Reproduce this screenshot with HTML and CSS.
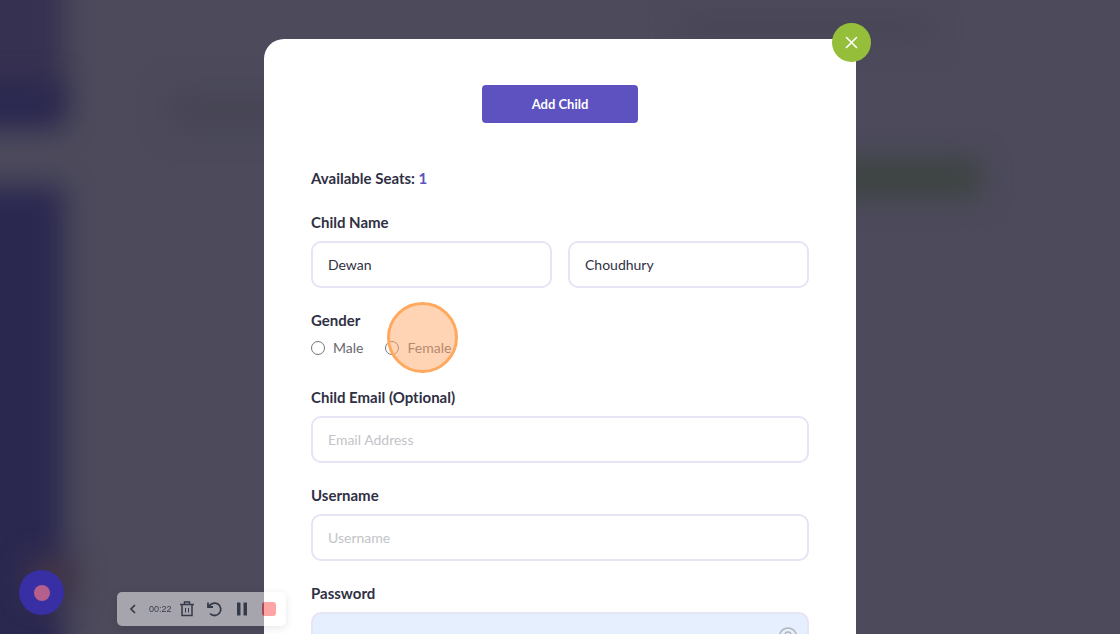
FILE: index.html
```html
<!DOCTYPE html>
<html lang="en">
<head>
    <meta charset="UTF-8">
    <meta name="viewport" content="width=device-width, initial-scale=1.0">
    <title>Add Child</title>
    <link rel="stylesheet" href="styles.css">
</head>
<body>
    <!-- blurred page behind the modal -->
    <div class="backdrop" aria-hidden="true">
        <div class="blob blob-nav-top"></div>
        <div class="blob blob-nav-active"></div>
        <div class="blob blob-nav-main"></div>
        <div class="blob blob-title"></div>
        <div class="blob blob-header"></div>
        <div class="blob blob-button"></div>
        <div class="blob blob-avatar"></div>
    </div>

    <main class="modal">
        <button type="button" class="btn-close" aria-label="Close">
            <svg width="13" height="13" viewBox="0 0 13 13" fill="none" stroke="#fff" stroke-width="1.6" stroke-linecap="round">
                <path d="M1.5 1.5l10 10M11.5 1.5l-10 10"/>
            </svg>
        </button>

        <form id="childForm">
            <button type="submit" class="btn-submit">Add Child</button>

            <p class="seats">Available Seats: <span>1</span></p>

            <div class="form-group">
                <label for="firstName">Child Name</label>
                <div class="name-row">
                    <input type="text" class="text-input" id="firstName" value="Dewan">
                    <input type="text" class="text-input" id="lastName" value="Choudhury" aria-label="Last name">
                </div>
            </div>

            <fieldset class="form-group gender">
                <legend>Gender</legend>
                <div class="radio-row">
                    <label class="radio"><input type="radio" name="gender" value="male">Male</label>
                    <label class="radio"><input type="radio" name="gender" value="female">Female<span class="click-marker"></span></label>
                </div>
            </fieldset>

            <div class="form-group">
                <label for="email">Child Email (Optional)</label>
                <input type="email" class="text-input" id="email" placeholder="Email Address">
            </div>

            <div class="form-group">
                <label for="username">Username</label>
                <input type="text" class="text-input" id="username" placeholder="Username">
            </div>

            <div class="form-group">
                <label for="password">Password</label>
                <div class="password-wrap">
                    <input type="password" class="text-input filled" id="password">
                    <button type="button" class="btn-eye" aria-label="Show password">
                        <svg width="20" height="16" viewBox="0 0 20 16" fill="none" stroke="#b4b6bc" stroke-width="1.5">
                            <path d="M1 8C3 3.500 6 1 10 1s7 2.500 9 7c-2 4.500-5 7-9 7s-7-2.500-9-7z"/>
                            <circle cx="10" cy="8" r="3"/>
                        </svg>
                    </button>
                </div>
            </div>
        </form>
    </main>

    <button type="button" class="btn-record" aria-label="Recorder"><span></span></button>

    <div class="recorder">
        <button type="button" aria-label="Collapse">
            <svg width="8" height="10" viewBox="0 0 8 10" fill="none" stroke="currentColor" stroke-width="1.7">
                <path d="M6 1L2 5l4 4"/>
            </svg>
        </button>
        <span class="time">00:22</span>
        <button type="button" aria-label="Delete">
            <svg width="14" height="16" viewBox="0 0 14 16" fill="none" stroke="currentColor" stroke-width="1.5">
                <path d="M0 3.500h14M4.500 3V1h5v2M2 3.500v11h10v-11"/>
                <path d="M5.500 7v4.500M8.500 7v4.500" stroke-width="1"/>
            </svg>
        </button>
        <button type="button" aria-label="Restart">
            <svg width="14" height="16" viewBox="1 0 14 16" fill="none" stroke="currentColor" stroke-width="1.8" overflow="visible">
                <path d="M2 5.500A6.200 6.200 0 1 1 3 12.500"/>
                <path d="M1 1.500v4.500h5"/>
            </svg>
        </button>
        <button type="button" aria-label="Pause">
            <svg width="12" height="14" viewBox="0 0 12 14" fill="currentColor">
                <rect x="1" y=".5" width="3.500" height="13" rx=".5"/>
                <rect x="7.500" y=".5" width="3.500" height="13" rx=".5"/>
            </svg>
        </button>
        <button type="button" class="btn-stop" aria-label="Stop"></button>
    </div>
</body>
</html>
```
FILE: styles.css
```css
:root {
    --primary-color: #5d52bf;
    --accent-color: #95bf3a;
    --text-color: #2f3044;
    --border-color: #e6e4f5;
    --overlay-color: #4c4a5b;
}

* {
    margin: 0;
    padding: 0;
    box-sizing: border-box;
}

body {
    font-family: Lato, "Noto Sans", sans-serif;
    font-size: 14px;
    font-variant-ligatures: none;
    line-height: 24px;
    color: var(--text-color);
    background-color: var(--overlay-color);
    height: 100vh;
    overflow: hidden;
}

button {
    border: none;
    background: none;
    color: inherit;
    font-family: inherit;
    cursor: pointer;
}

/* Blurred page */
.backdrop {
    position: fixed;
    inset: 0;
    overflow: hidden;
}

.blob {
    position: absolute;
    background-color: #2b2850;
    filter: blur(14px);
}

.blob-nav-top {
    left: -40px;
    top: -40px;
    width: 104px;
    height: 150px;
    background-color: #363150;
}

.blob-nav-active {
    left: -40px;
    top: 82px;
    width: 104px;
    height: 46px;
}

.blob-nav-main {
    left: -40px;
    top: 186px;
    width: 104px;
    bottom: -40px;
}

.blob-title {
    left: 170px;
    top: 90px;
    width: 140px;
    height: 40px;
    background-color: #474555;
}

.blob-header {
    left: 680px;
    top: 15px;
    width: 250px;
    height: 25px;
    background-color: #474556;
}

.blob-button {
    left: 780px;
    top: 160px;
    width: 200px;
    height: 36px;
    background-color: #3c433f;
}

.blob-avatar {
    left: 30px;
    bottom: 35px;
    width: 45px;
    height: 40px;
    background-color: #453747;
}

/* Modal */
.modal {
    position: relative;
    width: calc(100% - 32px);
    max-width: 592px;
    margin: 39px auto 0;
    padding: 46px 47px;
    background-color: #fff;
    border-radius: 20px;
}

.btn-close {
    position: absolute;
    top: -16px;
    right: -15px;
    width: 39px;
    height: 39px;
    display: flex;
    align-items: center;
    justify-content: center;
    background-color: var(--accent-color);
    border-radius: 50%;
}

.btn-submit {
    display: block;
    width: 156px;
    height: 38px;
    margin: 0 auto 44px;
    background-color: var(--primary-color);
    color: #fff;
    font-size: 13px;
    font-weight: bold;
    border-radius: 4px;
}

.seats,
.form-group > label,
legend {
    display: block;
    font-size: 15px;
    font-weight: bold;
    line-height: 22px;
}

.seats {
    margin-bottom: 22px;
}

.seats span {
    color: var(--primary-color);
}

.form-group {
    margin-bottom: 21px;
    border: none;
}

.form-group > label {
    margin-bottom: 8px;
}

.name-row {
    display: flex;
    gap: 16px;
}

.text-input {
    width: 100%;
    height: 47px;
    padding: 0 15px;
    border: 2px solid var(--border-color);
    border-radius: 10px;
    background-color: #fff;
    color: var(--text-color);
    font-family: inherit;
    font-size: 14px;
}

.text-input::placeholder {
    color: #c3c4c8;
}

.text-input.filled {
    background-color: #e5effd;
}

.radio-row {
    display: flex;
    gap: 22px;
    padding: 5px 0;
}

.radio {
    position: relative;
    display: flex;
    align-items: center;
    gap: 8px;
    color: #68686f;
}

.radio input {
    appearance: none;
    width: 14px;
    height: 14px;
    border: 1px solid #75757b;
    border-radius: 50%;
}

/* click highlight over the Female option */
.click-marker {
    position: absolute;
    top: -34px;
    left: 2px;
    width: 71px;
    height: 71px;
    border: 3px solid #ffa95f;
    border-radius: 50%;
    background-color: rgba(255, 170, 108, 0.5);
    pointer-events: none;
}

.password-wrap {
    position: relative;
}

.btn-eye {
    position: absolute;
    top: 15px;
    right: 11px;
    height: 16px;
    line-height: 0;
}

/* Recorder */
.btn-record {
    position: fixed;
    left: 19px;
    bottom: 19px;
    width: 45px;
    height: 45px;
    display: flex;
    align-items: center;
    justify-content: center;
    background-color: #372fa3;
    border-radius: 50%;
}

.btn-record span {
    width: 16px;
    height: 16px;
    background-color: #b55f8d;
    border-radius: 50%;
}

.recorder {
    position: fixed;
    left: 117px;
    bottom: 8px;
    height: 34px;
    padding: 0 10px 0 12px;
    display: flex;
    align-items: center;
    gap: 14px;
    background-color: #fff;
    border-radius: 5px;
    box-shadow: 0 2px 8px rgba(0, 0, 0, 0.2);
    color: #1d2a3a;
    opacity: 0.5;
}

.recorder button {
    display: flex;
}

.recorder .time {
    margin: 0 -6px 0 -2px;
    font-family: "Liberation Sans", Arial, sans-serif;
    font-size: 9px;
}

.recorder .btn-stop {
    width: 14px;
    height: 14px;
    background-color: #ff4b4b;
    border-radius: 3px;
}
```
